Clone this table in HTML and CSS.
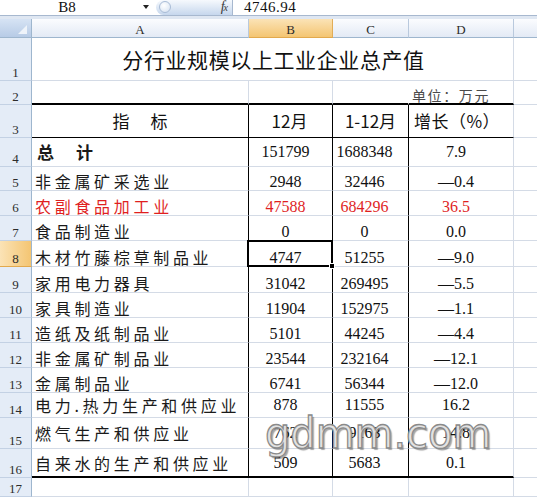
FILE: index.html
```html
<!DOCTYPE html>
<html lang="zh-CN">
<head>
<meta charset="utf-8">
<title>分行业规模以上工业企业总产值</title>
<link rel="stylesheet" href="styles.css">
</head>
<body>
<div class="app">
  <div class="fbar">
    <div class="namebox">B8</div>
    <div class="nb-arrow"></div>
    <div class="fxbox"><span class="knob"></span><span class="fx">f<small>x</small></span></div>
    <div class="fvalue">4746.94</div>
  </div>
  <div class="strip"></div>
  <div class="sheet">
    <div class="corner"><span class="tri"></span></div>
    <div class="ch">A</div><div class="ch sel">B</div><div class="ch">C</div><div class="ch">D</div><div class="ch last"></div>

    <div class="rh">1</div>
    <div class="c title">分行业规模以上工业企业总产值</div>
    <div class="c e"></div>

    <div class="rh">2</div>
    <div class="c a top"></div><div class="c b top"></div>
    <div class="c c3 top nogrid"></div>
    <div class="c d top unit">单位：万元</div>
    <div class="c e"></div>

    <div class="rh">3</div>
    <div class="c a hd"><span>指</span><span>标</span></div>
    <div class="c b hd">12月</div>
    <div class="c c3 hd">1-12月</div>
    <div class="c d hd">增长（%）</div>
    <div class="c e"></div>

    <div class="rh">4</div>
    <div class="c a lab mid total"><span>总</span><span>计</span></div>
    <div class="c b num mid">151799</div>
    <div class="c c3 num mid">1688348</div>
    <div class="c d num mid">7.9</div>
    <div class="c e"></div>

    <div class="rh">5</div>
    <div class="c a lab">非金属矿采选业</div>
    <div class="c b num">2948</div>
    <div class="c c3 num">32446</div>
    <div class="c d num">—0.4</div>
    <div class="c e"></div>

    <div class="rh">6</div>
    <div class="c a lab red">农副食品加工业</div>
    <div class="c b num red">47588</div>
    <div class="c c3 num red">684296</div>
    <div class="c d num red">36.5</div>
    <div class="c e"></div>

    <div class="rh">7</div>
    <div class="c a lab">食品制造业</div>
    <div class="c b num">0</div>
    <div class="c c3 num">0</div>
    <div class="c d num">0.0</div>
    <div class="c e"></div>

    <div class="rh sel">8</div>
    <div class="c a lab">木材竹藤棕草制品业</div>
    <div class="c b num active">4747<span class="selframe"><span class="handle"></span></span></div>
    <div class="c c3 num">51255</div>
    <div class="c d num">—9.0</div>
    <div class="c e"></div>

    <div class="rh">9</div>
    <div class="c a lab">家用电力器具</div>
    <div class="c b num">31042</div>
    <div class="c c3 num">269495</div>
    <div class="c d num">—5.5</div>
    <div class="c e"></div>

    <div class="rh">10</div>
    <div class="c a lab">家具制造业</div>
    <div class="c b num">11904</div>
    <div class="c c3 num">152975</div>
    <div class="c d num">—1.1</div>
    <div class="c e"></div>

    <div class="rh">11</div>
    <div class="c a lab">造纸及纸制品业</div>
    <div class="c b num">5101</div>
    <div class="c c3 num">44245</div>
    <div class="c d num">—4.4</div>
    <div class="c e"></div>

    <div class="rh">12</div>
    <div class="c a lab">非金属矿制品业</div>
    <div class="c b num">23544</div>
    <div class="c c3 num">232164</div>
    <div class="c d num">—12.1</div>
    <div class="c e"></div>

    <div class="rh">13</div>
    <div class="c a lab">金属制品业</div>
    <div class="c b num">6741</div>
    <div class="c c3 num">56344</div>
    <div class="c d num">—12.0</div>
    <div class="c e"></div>

    <div class="rh">14</div>
    <div class="c a lab mid">电力.热力生产和供应业</div>
    <div class="c b num mid">878</div>
    <div class="c c3 num mid">11555</div>
    <div class="c d num mid">16.2</div>
    <div class="c e"></div>

    <div class="rh">15</div>
    <div class="c a lab mid">燃气生产和供应业</div>
    <div class="c b num mid">762</div>
    <div class="c c3 num mid">9163</div>
    <div class="c d num mid">14.8</div>
    <div class="c e"></div>

    <div class="rh">16</div>
    <div class="c a lab mid bot">自来水的生产和供应业</div>
    <div class="c b num mid bot">509</div>
    <div class="c c3 num mid bot">5683</div>
    <div class="c d num mid bot">0.1</div>
    <div class="c e"></div>

    <div class="rh">17</div>
    <div class="c a"></div><div class="c b"></div><div class="c c3"></div><div class="c d"></div><div class="c e"></div>

    <div class="watermark" aria-hidden="true">gdmm.com</div>
  </div>
</div>
</body>
</html>
```

FILE: styles.css
```css
* { box-sizing: border-box; }
html, body { margin: 0; padding: 0; background: #fff; }
body { width: 537px; height: 497px; overflow: hidden; font-family: "Liberation Serif", serif; color: #111; }

.app { width: 537px; }

/* formula bar */
.fbar { display: flex; height: 16px; border-bottom: 1px solid #a7b8cf; background: #fff; }
.namebox { width: 134px; text-align: center; font: 15px/14px "Liberation Serif", serif; color: #111; }
.nb-arrow { width: 0; height: 0; margin: 5px 0 0 9px; border-left: 3.5px solid transparent; border-right: 3.5px solid transparent; border-top: 4px solid #222; }
.fxbox { position: relative; margin-left: 7px; width: 76px; height: 15px; border-radius: 8px 0 0 8px; background: linear-gradient(#f6f9fd, #c6d7ed); display: flex; align-items: center; justify-content: flex-end; padding-right: 5px; }
.knob { position: absolute; left: 3px; top: 1px; width: 12px; height: 12px; border-radius: 50%; border: 1px solid #a9bcd6; background: radial-gradient(circle at 40% 35%, #ffffff, #d3e0f1); }
.fx { font: italic 14px/14px "Liberation Serif", serif; color: #3a3a3a; letter-spacing: -1px; }
.fx small { font-size: 10px; }
.fvalue { flex: 1; border-left: 1px solid #a7b8cf; padding-left: 11px; font: 15px/14px "Liberation Serif", serif; letter-spacing: 0.5px; color: #111; }
.strip { height: 3px; background: #dfe7f2; }

/* sheet grid */
.sheet {
  position: relative;
  display: grid;
  grid-template-columns: 32px 217px 84px 76px 105px 1fr;
  grid-template-rows: 19px 43px 24px 33px 29px 24px 25px 25px 26px 26px 25px 25px 25px 25px 25px 31px 29px 19px;
}
.corner { position: relative; background: linear-gradient(#d6e3f4, #b7cbe6); border-right: 1px solid #9eb6ce; border-bottom: 1px solid #9eb6ce; }
.tri { position: absolute; right: 4px; bottom: 3px; width: 0; height: 0; border-left: 9px solid transparent; border-bottom: 9px solid #eef3fa; }
.ch { background: linear-gradient(#fbfcfe, #e3eaf5); border-right: 1px solid #b9c9dd; border-bottom: 1px solid #9eb6ce; display: flex; align-items: center; justify-content: center; font: 13px/13px "Liberation Serif", serif; color: #2c2c2c; padding-top: 2px; }
.ch.sel { background: linear-gradient(#fbe3b6, #f4c572); border-right-color: #e2ad57; border-bottom-color: #e2a94d; }
.ch.last { border-right: none; }
.rh { background: #e4ecf7; border-right: 1px solid #9eb6ce; border-bottom: 1px solid #c3d1e4; display: flex; align-items: flex-end; justify-content: center; font: 13px/13px "Liberation Serif", serif; color: #2c2c2c; padding-bottom: 1px; }
.rh.sel { background: linear-gradient(90deg, #fbe3b6, #f4c572); border-bottom-color: #e2a94d; }

.c { border-right: 1px solid #d4dbe6; border-bottom: 1px solid #d4dbe6; display: flex; align-items: flex-end; min-width: 0; }
.c.e { border-right: none; }
.c.nogrid { border-right-color: transparent; }
.title { grid-column: span 4; align-items: center; justify-content: center; font: 21px/24px "Noto Sans CJK SC", sans-serif; letter-spacing: 0.6px; color: #111; padding-left: 2px; }
.unit { font: 14px/16px "Noto Sans CJK SC", sans-serif; letter-spacing: 1.6px; color: #4a4a4a; padding-left: 3px; white-space: nowrap; }
.top { border-bottom: 2px solid #000; }

.a.hd, .b.hd, .c3.hd, .a.lab, .b.num, .c3.num { border-right-color: #000; }
.hd { border-bottom-color: #000; align-items: center; justify-content: center; font: 17px/20px "Noto Sans CJK SC", sans-serif; color: #111; }
.a.hd { gap: 21px; }
.b.hd { padding-right: 2px; }
.d.hd { padding-right: 8px; letter-spacing: 0.5px; }
.bot { border-bottom: 2px solid #000; }

.lab { padding-left: 3px; font: 16px/18px "Noto Sans CJK SC", sans-serif; letter-spacing: 3.7px; color: #1a1a1a; white-space: nowrap; }
.total { font-weight: 700; font-size: 17px; gap: 22px; padding-left: 5px; letter-spacing: 0; }
.num { justify-content: center; font: 16px/16px "Liberation Serif", serif; color: #111; }
.b.num { padding-right: 10px; }
.c3.num { padding-right: 12px; }
.d.num { padding-right: 10px; }
.mid { align-items: center; }
.red { color: #e01f1f; }

.active { position: relative; }
.selframe { position: absolute; left: -2px; top: -1px; right: -1px; bottom: -1px; border: 2px solid #000; z-index: 3; }
.handle { position: absolute; right: -4px; bottom: -4px; width: 6px; height: 6px; background: #000; border: 1px solid #fff; }

.watermark { position: absolute; left: 265px; top: 394px; font: 42px/42px "DejaVu Sans", sans-serif; color: #e2e2e2; -webkit-text-stroke: 1.3px #8a8a8a; text-shadow: 2px 2px 1px rgba(0,0,0,0.35); transform: scaleX(0.95); transform-origin: left top; z-index: 4; white-space: nowrap; pointer-events: none; }
```
